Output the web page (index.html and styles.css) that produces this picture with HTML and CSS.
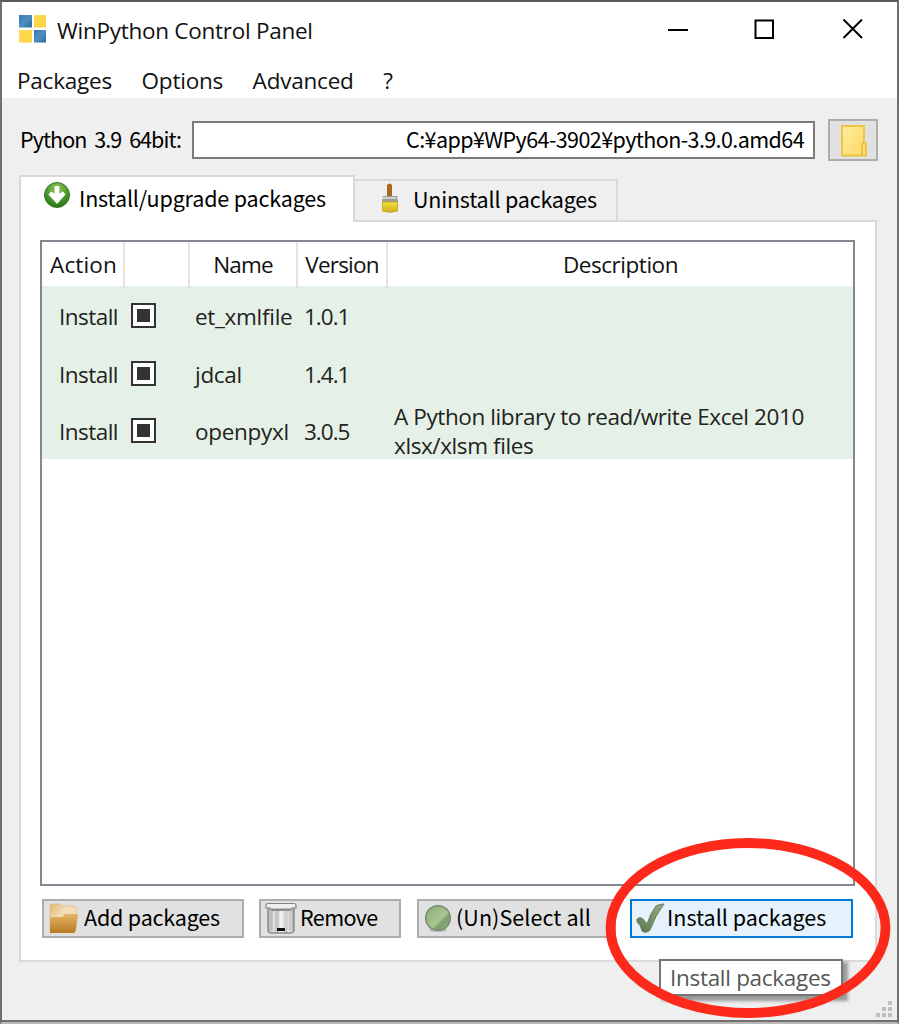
FILE: index.html
```
<!DOCTYPE html>
<html lang="en">
<head>
<meta charset="utf-8">
<title>WinPython Control Panel</title>
<link rel="stylesheet" href="styles.css">
</head>
<body>
<div class="window">
  <header class="titlebar">
    <svg class="app-icon" width="28" height="28" viewBox="0 0 28 28">
      <defs>
        <linearGradient id="blue" x1="0" y1="0" x2="1" y2="1"><stop offset="0" stop-color="#3a79ae"/><stop offset=".5" stop-color="#4d8fc4"/><stop offset="1" stop-color="#2f6797"/></linearGradient>
        <linearGradient id="yellow" x1="0" y1="0" x2="1" y2="1"><stop offset="0" stop-color="#ffdc5c"/><stop offset="1" stop-color="#ffd13c"/></linearGradient>
      </defs>
      <rect width="13" height="12.500" fill="url(#blue)"/><rect x="15" width="12" height="12.500" fill="url(#yellow)"/>
      <rect y="15" width="13" height="12.500" fill="url(#yellow)"/><rect x="15" y="15" width="12" height="12.500" fill="url(#blue)"/>
    </svg>
    <span class="title">WinPython Control Panel</span>
    <svg class="controls" width="196" height="22" viewBox="0 0 196 22" fill="none" stroke="#000" stroke-width="2">
      <path d="M0 11H20"/><rect x="87.500" y="1.500" width="17.500" height="17.500"/>
      <path d="M175.500 .5L194 19M194 .5L175.500 19"/>
    </svg>
  </header>
  <nav class="menubar"><span>Packages</span><span>Options</span><span>Advanced</span><span>?</span></nav>
  <div class="path-row">
    <span class="path-label">Python 3.9 64bit:</span>
    <div class="path-input"><span>C:¥app¥WPy64-3902¥python-3.9.0.amd64</span></div>
    <div class="browse">
      <svg width="26" height="32" viewBox="0 0 26 32"><defs><linearGradient id="fold" x1="0" y1="0" x2="1" y2="1"><stop offset="0" stop-color="#ffec9d"/><stop offset="1" stop-color="#fbd869"/></linearGradient></defs><path d="M1 1H23V18H25V30.500H1Z" fill="url(#fold)" stroke="#edc43d" stroke-width="1.800"/><path d="M21 30V20Q21 18 23 18" fill="none" stroke="#e8ba2e" stroke-width="1.500"/></svg>
    </div>
  </div>
  <main class="tabs">
    <div class="tabstrip">
      <div class="tab active">
        <svg width="28" height="28" viewBox="0 0 28 28"><defs><radialGradient id="gr" cx=".5" cy=".25" r=".8"><stop offset="0" stop-color="#91c95d"/><stop offset=".6" stop-color="#459426"/><stop offset="1" stop-color="#236d17"/></radialGradient></defs><circle cx="14" cy="14" r="12.500" fill="url(#gr)" stroke="#397827"/><path d="M11.700 5H16.300V12.500L20 10.500L22.500 13.500L14 23L5.500 13.500L8 10.500L11.700 12.500Z" fill="#fff"/></svg>
        <span>Install/upgrade packages</span>
      </div>
      <div class="tab idle">
        <svg width="18" height="32" viewBox="0 0 18 32"><defs><linearGradient id="br" x1="0" y1="0" x2="0" y2="1"><stop offset="0" stop-color="#f5df43"/><stop offset="1" stop-color="#cfae18"/></linearGradient></defs><path d="M6 14V2Q8.500 -1 11 2V14Z" fill="#a7681f"/><path d="M2 13H16L17 19H1Z" fill="#9b9c99"/><rect x="2" y="14" width="13" height="2" fill="#d1d1ce"/><path d="M1.500 19H16.500V28Q9 30.500 1.500 28Z" fill="url(#br)" stroke="#c8ac24"/></svg>
        <span>Uninstall packages</span>
      </div>
    </div>
    <section class="panel">
      <div class="table">
        <div class="tr head"><span class="h-action">Action</span><span></span><span class="tight">Name</span><span class="tight">Version</span><span class="h-desc">Description</span></div>
        <div class="tr row"><span class="act">Install</span><span><i class="check"></i></span><span class="name">et_xmlfile</span><span class="ver">1.0.1</span><span></span></div>
        <div class="tr row"><span class="act">Install</span><span><i class="check"></i></span><span class="name">jdcal</span><span class="ver">1.4.1</span><span></span></div>
        <div class="tr row"><span class="act">Install</span><span><i class="check"></i></span><span class="name">openpyxl</span><span class="ver">3.0.5</span><span class="desc">A Python library to read/write Excel 2010<br>xlsx/xlsm files</span></div>
      </div>
      <div class="buttons">
        <div class="btn add">
          <svg width="30" height="32" viewBox="0 0 30 32"><defs><linearGradient id="fb" x1="0" y1="0" x2="1" y2="1"><stop offset="0" stop-color="#e3b36e"/><stop offset=".4" stop-color="#f3dcb4"/><stop offset="1" stop-color="#f0e4d0"/></linearGradient><linearGradient id="ff" x1="0" y1="0" x2="0" y2="1"><stop offset="0" stop-color="#e6b769"/><stop offset="1" stop-color="#b87a20"/></linearGradient></defs><path d="M1 2.500Q1 1 3 1H11L14 3H24Q27 3 27 6V27H1Z" fill="url(#fb)" stroke="#dcb885" stroke-width=".7"/><path d="M1 16Q1 13 4 13H13L16 10H28Q29.500 10 29 12L26.500 28Q26 30 24 30H1Z" fill="url(#ff)"/><path d="M2 15Q3 13.500 5 13.500H13.500L16.500 10.500H28.500" fill="none" stroke="#f5deb4"/></svg>
          <span>Add packages</span>
        </div>
        <div class="btn remove">
          <svg width="32" height="32" viewBox="0 0 32 32"><defs><linearGradient id="bin"><stop offset="0" stop-color="#aaa"/><stop offset=".2" stop-color="#e4e4e4"/><stop offset=".35" stop-color="#bcbcbc"/><stop offset=".5" stop-color="#f8f8f8"/><stop offset=".7" stop-color="#c8c8c8"/><stop offset=".85" stop-color="#eee"/><stop offset="1" stop-color="#999"/></linearGradient></defs><path d="M3 5H29V29Q28 31 26 31H6Q4 31 3 29Z" fill="url(#bin)" stroke="#8d8d8d" stroke-width="1.500"/><path d="M3 1.500H29Q31 1.500 31 3.500V6H27L26 8H6L5 6H1V3.500Q1 1.500 3 1.500Z" fill="#eee" stroke="#858585" stroke-width="1.200"/><path d="M6 6.500H26L25 9H7Z" fill="#8b8b8b"/><path d="M7 9V29M25 9V29" stroke="#777" stroke-opacity=".5"/><path d="M12 29V26H20V29Z" fill="#111"/></svg>
          <span>Remove</span>
        </div>
        <div class="btn select">
          <svg width="28" height="30" viewBox="0 0 28 30"><defs><linearGradient id="ball" x1="0" y1="0" x2="1" y2="1"><stop offset="0" stop-color="#89aa76"/><stop offset=".58" stop-color="#a8c692"/><stop offset=".66" stop-color="#7f9f70"/><stop offset="1" stop-color="#8fae7d"/></linearGradient></defs><ellipse cx="14" cy="26" rx="9" ry="2" fill="#bbb"/><circle cx="14" cy="14" r="12.300" fill="url(#ball)" stroke="#7a8b73" stroke-width="1.500"/></svg>
          <span>(Un)Select all</span>
        </div>
        <div class="btn install">
          <svg width="30" height="31" viewBox="0 0 30 31"><defs><linearGradient id="tick" x1="0" y1="1" x2="1" y2="0"><stop offset="0" stop-color="#5d7751"/><stop offset="1" stop-color="#93aa87"/></linearGradient></defs><path d="M2 16Q5 13 8 16L12 21Q16 9 21 3Q24 1 29 1Q20 13 15 27Q11 31 7 28Q6 22 2 19Z" fill="url(#tick)" stroke="#66805b" stroke-width="1"/></svg>
          <span>Install packages</span>
        </div>
      </div>
    </section>
  </main>
  <svg class="grip" width="18" height="18" viewBox="0 0 18 18" fill="#bfbfbf"><path d="M12 0h4v4h-4zM6 6h4v4H6zM12 6h4v4h-4zM0 12h4v4H0zM6 12h4v4H6zM12 12h4v4h-4z"/></svg>
  <div class="tooltip">Install packages</div>
  <svg class="ring" width="288" height="184" viewBox="0 0 288 184"><ellipse cx="144" cy="92" rx="137.500" ry="85" fill="none" stroke="#fd291b" stroke-width="9.800"/></svg>
</div>
</body>
</html>
```
FILE: styles.css
```
* { box-sizing: border-box; }

body {
  margin: 0;
  background: #efefef;
  color: #111;
  font: 22.5px "Open Sans", "Noto Sans", sans-serif;
  overflow: hidden;
}

svg { display: block; flex: none; }

.window {
  position: relative;
  width: 899px;
  height: 1024px;
  border: 2px solid #6f6f6f;
  border-top-color: #5c5c5c;
  border-bottom-color: #b9b9b9;
  box-shadow: inset 0 -2px #707070;
  white-space: nowrap;
}

.titlebar {
  display: flex;
  height: 55px;
  padding: 13px 33px 0 17px;
  background: #fff;
}
.title {
  margin: 0 auto 0 10px;
  line-height: 31px;
  letter-spacing: -.27px;
}
.controls { margin-top: 4px; }

.menubar {
  display: flex;
  gap: 29.5px;
  height: 41px;
  padding: 0 0 0 15px;
  background: #fff;
  line-height: 47px;
  letter-spacing: -.21px;
}

.path-row {
  display: flex;
  height: 77px;
  padding: 21px 19px 0 18px;
}
.path-label, .path-input, .tab, .btn {
  font-family: "Noto Sans CJK JP", sans-serif;
  font-size: 21.5px;
  color: #000;
}
.path-label {
  width: 172px;
  line-height: 40px;
  letter-spacing: -.95px;
  word-spacing: 4px;
}
.path-input {
  width: 623px;
  height: 38px;
  margin-top: 2px;
  padding-right: 9px;
  border: 2px solid #7a7a7a;
  background: #fff;
  text-align: right;
  line-height: 32px;
  letter-spacing: -.59px;
}
.browse {
  display: flex;
  width: 50px;
  height: 42px;
  margin-left: 13px;
  padding: 4px 0 0 11px;
  border: 2px solid #adadad;
  background: #e1e1e1;
}

.tabs { padding: 0 20px 0 17px; }
.tabstrip { display: flex; height: 47px; }
.tab { display: flex; border: 2px solid #d9d9d9; }
.tab.active {
  z-index: 1;
  width: 336px;
  height: 47px;
  padding: 4px 0 0 22px;
  border-bottom: 0;
  background: #fff;
  letter-spacing: -.16px;
}
.tab.active span { margin-left: 8px; line-height: 33px; }
.tab.idle {
  width: 265px;
  height: 43px;
  margin: 4px 0 0 -2px;
  padding: 2px 0 0 26px;
  border-bottom: 0;
  letter-spacing: -.2px;
}
.tab.idle span { margin-left: 14px; line-height: 32px; }

.panel {
  height: 742px;
  margin-top: -2px;
  padding: 18px 20px 0 19px;
  border: 2px solid #d9d9d9;
  background: #fff;
}
.table {
  height: 646px;
  border: 2px solid #828790;
}
.tr {
  display: grid;
  grid-template-columns: 83px 65px 108px 90px 1fr;
}
.head { height: 44px; line-height: 46px; text-align: center; }
.head > span { border-right: 2px solid #e3e3e3; }
.head > span:last-child { border: 0; }
.h-action { padding-left: 2px; letter-spacing: .16px; }
.tight { letter-spacing: -.8px; }
.h-desc { letter-spacing: -.47px; }
.row {
  height: 57.67px;
  background: #e5f1e6;
  line-height: 61px;
  color: #222;
}
.act { padding-left: 17px; letter-spacing: -.53px; }
.check {
  display: block;
  width: 25px;
  height: 25px;
  margin: 17px 0 0 6px;
  border: 2px solid #333;
  background: #333;
  box-shadow: inset 0 0 0 4px #fff;
}
.name { padding-left: 5px; letter-spacing: -.3px; }
.ver { padding-left: 6px; letter-spacing: -1px; }
.desc { padding: 1px 0 0 6px; line-height: 29px; letter-spacing: -.4px; }

.buttons { display: flex; padding: 13px 0 0 2px; }
.btn {
  display: flex;
  flex: none;
  height: 39px;
  border: 2px solid #adadad;
  background: #e1e1e1;
  line-height: 32px;
}
.add { width: 202px; margin-right: 15px; padding: 2px 0 0 5px; letter-spacing: -.18px; }
.add span { margin: -2px 0 0 5px; }
.remove { width: 142px; margin-right: 16px; padding: 1px 0 0 4px; letter-spacing: -.6px; }
.remove span { margin: -1px 0 0 3px; }
.select { width: 199px; margin-right: 14px; padding: 3px 0 0 5px; letter-spacing: .08px; }
.select span { margin: -3px 0 0 4px; }
.install {
  width: 223px;
  padding: 2px 0 0 3px;
  border-color: #0078d7;
  background: #e5f1fb;
}
.install span { margin: -2px 0 0 2px; }

.grip { position: absolute; left: 874px; top: 999px; }
.tooltip {
  position: absolute;
  left: 657px;
  top: 957px;
  width: 184px;
  height: 37px;
  padding-left: 9px;
  border: 2px solid #767676;
  background: #fff;
  box-shadow: 4px 4px 3px 1px #9a9a9a;
  line-height: 34px;
  letter-spacing: -.3px;
  color: #575757;
}
.ring { position: absolute; left: 601.5px; top: 834px; }
```
